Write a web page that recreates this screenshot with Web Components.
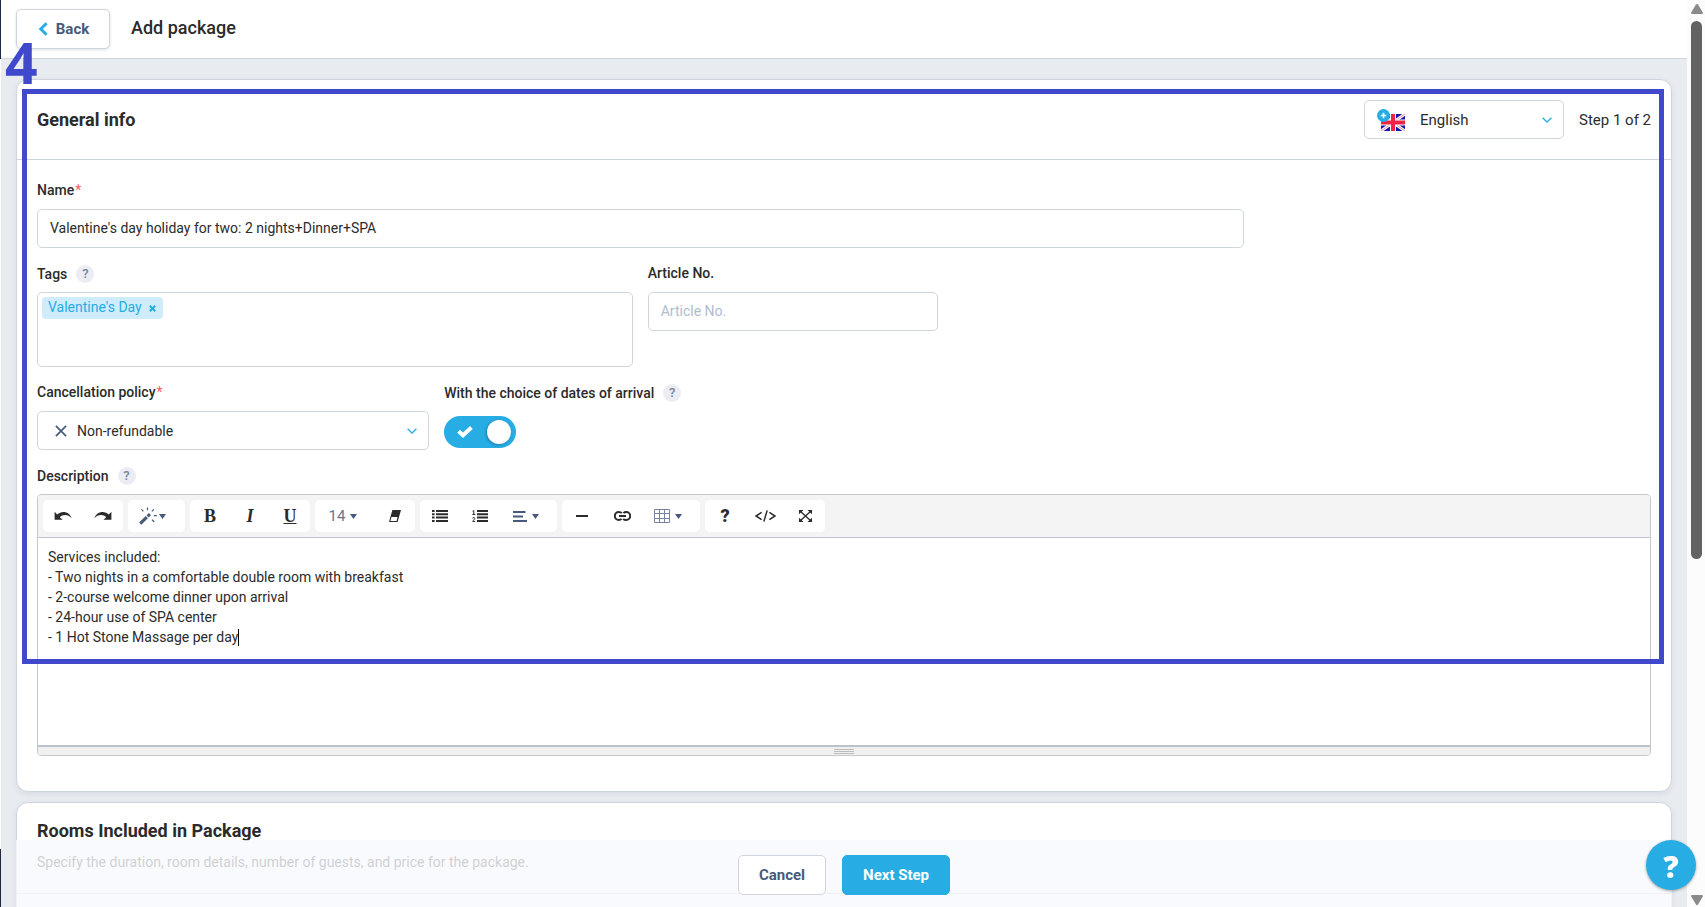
<!DOCTYPE html>
<html lang="en">
<head>
<meta charset="utf-8">
<title>Add package</title>
<style>
  :root {
    --accent: #27ade4;
    --line: #d0d5dd;
    --text: #2b2b2b;
    --slate: #475a7c;
    --mark: #4048cc;
  }

  * {
    box-sizing: border-box;
  }

  body {
    background-color: #e8ebf0;
    color: var(--text);
    font-family: Roboto, "Liberation Sans", sans-serif;
    font-size: 14px;
    height: 100vh;
    line-height: 18px;
    margin: 0;
    overflow: hidden;
  }

  package-page {
    height: 100%;
  }
</style>
</head>
<body>
<package-page>
  <page-header slot="header" heading="Add package"></page-header>

  <info-card heading="General info">
    <select-box slot="actions" name="Language" value="English" icon="flag" hide-label></select-box>
    <span slot="actions">Step 1 of 2</span>
    <form-grid>
      <text-field class="full" label="Name" required value="Valentine's day holiday for two: 2 nights+Dinner+SPA"></text-field>
      <tags-field class="half" label="Tags" tag="Valentine's Day"></tags-field>
      <text-field class="quarter" label="Article No." placeholder="Article No."></text-field>
      <select-box class="third" name="Cancellation policy" required value="Non-refundable" icon="cross"></select-box>
      <toggle-field class="rest" label="With the choice of dates of arrival"></toggle-field>
    </form-grid>
    <rich-editor label="Description"></rich-editor>
  </info-card>

  <info-card heading="Rooms Included in Package" subheading="Specify the duration, room details, number of guests, and price for the package."></info-card>

  <action-bar slot="footer"></action-bar>
  <help-bubble slot="footer"></help-bubble>
  <step-mark slot="footer" number="4"></step-mark>
  <scroll-rail slot="rail"></scroll-rail>
</package-page>

<script>
// shared rules for every labelled control
const fieldStyles = /*css*/`
  * {
    box-sizing: border-box;
  }

  :host {
    display: block;
    min-width: 0;
  }

  .label-row {
    align-items: center;
    display: flex;
    gap: 9px;
    height: 18px;
    margin-bottom: 10px;
  }

  .label-row.with-help {
    height: 20px;
    margin-bottom: 8px;
  }

  label {
    font-weight: 500;
  }

  .required {
    color: #ff5a5a;
    font-weight: 400;
    margin-left: 1px;
  }

  .help {
    align-items: center;
    background-color: #ebedf2;
    border: none;
    border-radius: 50%;
    color: #7485a3;
    display: flex;
    font: 500 13px/18px Roboto, sans-serif;
    height: 18px;
    justify-content: center;
    padding: 0;
    width: 18px;
  }

  .control {
    background-color: #fff;
    border: 1px solid var(--line);
    border-radius: 5px;
    color: var(--text);
    font: 14px/18px Roboto, "Liberation Sans", sans-serif;
    height: 39px;
    outline: none;
    padding: 0 12px;
    width: 100%;
  }

  input.control {
    padding-bottom: 2px;
  }

  .control::placeholder {
    color: #aebdd0;
    opacity: 1;
  }
`

const labelRow = (text, { required = false, help = false } = {}) => /*html*/`
  <div class="label-row ${help ? 'with-help' : ''}">
    <label for="control">${text}${required ? '<span class="required">*</span>' : ''}</label>
    ${help ? `<button type="button" class="help" aria-label="Help: ${text}">?</button>` : ''}
  </div>
`

class BaseElement extends HTMLElement {
  constructor () {
    super()
    this.shadow = this.attachShadow({ mode: 'open' })
  }

  connectedCallback () {
    this.render()
  }
}

class PackagePage extends BaseElement {
  render () {
    this.shadow.innerHTML =
    /*html*/`
    <style>
      :host {
        display: flex;
      }

      .edge {
        background: linear-gradient(#1f2943 59px, #fff 59px, #fff calc(100% - 58px), #1f2943 calc(100% - 58px));
        flex: none;
        width: 1px;
      }

      .page {
        display: flex;
        flex: 1;
        flex-direction: column;
        min-width: 0;
      }

      main {
        display: flex;
        flex: 1;
        flex-direction: column;
        gap: 10px;
        min-height: 0;
        overflow: hidden;
        padding: 20px 15px 0;
      }
    </style>

    <div class="edge"></div>
    <div class="page">
      <slot name="header"></slot>
      <main><slot></slot></main>
      <slot name="footer"></slot>
    </div>
    <slot name="rail"></slot>
    `
  }
}
customElements.define('package-page', PackagePage)

class PageHeader extends BaseElement {
  render () {
    this.shadow.innerHTML =
    /*html*/`
    <style>
      :host {
        align-items: center;
        background-color: #fff;
        border-bottom: 1px solid var(--line);
        display: flex;
        flex: none;
        gap: 21px;
        height: 59px;
        padding: 0 15px;
      }

      button {
        align-items: center;
        background-color: #fff;
        border: 1px solid var(--line);
        border-radius: 5px;
        box-shadow: 0 1px 3px rgba(30, 50, 90, 0.15);
        color: var(--slate);
        display: flex;
        font: 700 15px/18px Roboto, sans-serif;
        gap: 8px;
        height: 40px;
        justify-content: center;
        padding: 0 0 0 1px;
        width: 94px;
      }

      h1 {
        font-size: 18px;
        font-weight: 500;
        line-height: 24px;
        margin: 0;
        padding-bottom: 2px;
      }
    </style>

    <button type="button">
      <svg width="10" height="14" viewBox="0 0 10 14" fill="none" stroke="#27ade4" stroke-width="3"><path d="M8.6 1.2 2.8 7l5.8 5.8"/></svg>
      Back
    </button>
    <h1>${this.getAttribute('heading')}</h1>
    `
  }
}
customElements.define('page-header', PageHeader)

class InfoCard extends BaseElement {
  render () {
    const subheading = this.getAttribute('subheading')

    this.shadow.innerHTML =
    /*html*/`
    <style>
      :host {
        background-color: #fff;
        border: 1px solid var(--line);
        border-radius: 12px;
        box-shadow: 0 2px 6px rgba(30, 50, 90, 0.08);
        display: block;
        flex: none;
      }

      header {
        align-items: center;
        border-bottom: 1px solid var(--line);
        display: flex;
        gap: 15px;
        justify-content: space-between;
        min-height: 79px;
        padding: 0 20px;
      }

      header.stacked {
        align-items: flex-start;
        min-height: 74px;
        padding-top: 16px;
      }

      h2 {
        font-size: 18px;
        font-weight: 700;
        line-height: 24px;
        margin: 0;
      }

      p {
        color: var(--text);
        line-height: 20px;
        margin: 9px 0 0;
      }

      .actions {
        align-items: center;
        display: flex;
        font-size: 15px;
        gap: 15px;
      }

      .body {
        padding: 21px 20px 35px;
      }
    </style>

    <header class="${subheading ? 'stacked' : ''}">
      <div>
        <h2>${this.getAttribute('heading')}</h2>
        ${subheading ? `<p>${subheading}</p>` : ''}
      </div>
      <div class="actions"><slot name="actions"></slot></div>
    </header>
    <div class="body"><slot></slot></div>
    `
  }
}
customElements.define('info-card', InfoCard)

class FormGrid extends BaseElement {
  render () {
    this.shadow.innerHTML =
    /*html*/`
    <style>
      :host {
        display: block;
        padding-bottom: 16px;
      }

      /* three quarters of the card, one gutter less */
      .grid {
        column-gap: 15px;
        display: grid;
        grid-template-columns: repeat(12, minmax(0, 1fr));
        row-gap: 16px;
        width: calc(75% - 4px);
      }

      ::slotted(.full) { grid-column: span 12; }
      ::slotted(.half) { grid-column: span 6; }
      ::slotted(.quarter) { grid-column: span 3; }
      ::slotted(.third) { grid-column: 1 / span 4; }
      ::slotted(.rest) { grid-column: span 8; }
    </style>

    <div class="grid"><slot></slot></div>
    `
  }
}
customElements.define('form-grid', FormGrid)

class TextField extends BaseElement {
  render () {
    this.shadow.innerHTML =
    /*html*/`
    <style>${fieldStyles}</style>

    ${labelRow(this.getAttribute('label'), { required: this.hasAttribute('required') })}
    <input id="control" class="control" type="text"
      value="${this.getAttribute('value') || ''}"
      placeholder="${this.getAttribute('placeholder') || ''}">
    `
  }
}
customElements.define('text-field', TextField)

class TagsField extends BaseElement {
  render () {
    this.shadow.innerHTML =
    /*html*/`
    <style>
      ${fieldStyles}

      .box {
        align-items: flex-start;
        border: 1px solid var(--line);
        border-radius: 5px;
        display: flex;
        gap: 4px;
        height: 75px;
        padding: 4px;
      }

      .tag {
        align-items: center;
        background-color: #ceecfa;
        border-radius: 4px;
        color: var(--accent);
        display: flex;
        gap: 7px;
        height: 22px;
        padding: 0 7px 2px 6px;
      }

      .tag button {
        background: none;
        border: none;
        display: flex;
        padding: 2px 0 0;
      }

      input {
        background: none;
        border: none;
        flex: 1;
        font: inherit;
        height: 22px;
        min-width: 0;
        outline: none;
      }
    </style>

    ${labelRow(this.getAttribute('label'), { help: true })}
    <div class="box">
      <span class="tag">${this.getAttribute('tag')}
        <button type="button" aria-label="Remove tag">
          <svg width="7" height="7" viewBox="0 0 7 7" stroke="#27ade4" stroke-width="2"><path d="M.8.8l5.4 5.4M6.2.8.8 6.2"/></svg>
        </button>
      </span>
      <input id="control" type="text">
    </div>
    `
  }
}
customElements.define('tags-field', TagsField)

const selectIcons = {
  flag: /*html*/`
    <svg width="28" height="22" viewBox="0 0 28 22">
      <g transform="translate(4 5)">
        <path fill="#1416a4" d="M0 0h24v17H0z"/>
        <path stroke="#fff" stroke-width="3" d="M0 0l24 17M24 0 0 17"/>
        <path stroke="#f0718a" stroke-width="0.8" d="M0 0l24 17M24 0 0 17"/>
        <path stroke="#fff" stroke-width="6" d="M12 0v17M0 8.5h24"/>
        <path stroke="#ee2346" stroke-width="4" d="M12 0v17M0 8.5h24"/>
      </g>
      <circle cx="6.5" cy="6.5" r="6.5" fill="#27ade4"/>
      <path stroke="#fff" stroke-width="1.6" d="M6.5 3.8v5.4M3.8 6.5h5.4"/>
    </svg>`,
  cross: /*html*/`
    <svg width="12" height="12" viewBox="0 0 12 12" stroke="#475a7c" stroke-width="1.7"><path d="M.9.9l10.2 10.2M11.1.9.9 11.1"/></svg>`
}

class SelectBox extends BaseElement {
  render () {
    const name = this.getAttribute('name')
    const icon = this.getAttribute('icon')
    const hideLabel = this.hasAttribute('hide-label')

    this.shadow.innerHTML =
    /*html*/`
    <style>
      ${fieldStyles}

      :host([hide-label]) {
        width: 200px;
      }

      .wrap {
        display: grid;
      }

      .wrap > * {
        grid-area: 1 / 1;
      }

      select.control {
        appearance: none;
        padding: 0 32px 0 39px;
      }

      .flag select.control {
        font-size: 15px;
        padding-left: 55px;
      }

      .mark,
      .chevron {
        align-self: center;
        display: flex;
        pointer-events: none;
        z-index: 1;
      }

      .mark {
        padding-left: 18px;
      }

      .flag .mark {
        padding-left: 13px;
      }

      .chevron {
        justify-self: end;
        padding-right: 12px;
        padding-top: 1px;
      }
    </style>

    ${hideLabel ? '' : labelRow(name, { required: this.hasAttribute('required') })}
    <div class="wrap ${icon}">
      <select id="control" class="control" ${hideLabel ? `aria-label="${name}"` : ''}>
        <option>${this.getAttribute('value')}</option>
      </select>
      <span class="mark">${selectIcons[icon]}</span>
      <span class="chevron">
        <svg width="10" height="6" viewBox="0 0 10 6" fill="none" stroke="#27ade4" stroke-width="1.3"><path d="M.6.7 5 5 9.4.7"/></svg>
      </span>
    </div>
    `
  }
}
customElements.define('select-box', SelectBox)

class ToggleField extends BaseElement {
  render () {
    this.shadow.innerHTML =
    /*html*/`
    <style>
      ${fieldStyles}

      .switch {
        display: grid;
        padding-top: 5px;
        width: 72px;
      }

      .switch > * {
        grid-area: 1 / 1;
      }

      input {
        appearance: none;
        background-color: #c3cbd6;
        border-radius: 16px;
        height: 32px;
        margin: 0;
        width: 72px;
      }

      input:checked {
        background-color: var(--accent);
      }

      svg {
        align-self: center;
        margin-left: 13px;
        pointer-events: none;
      }

      .knob {
        align-self: center;
        background-color: #fff;
        border-radius: 50%;
        box-shadow: -1px 1px 3px rgba(0, 40, 80, 0.35);
        height: 24px;
        justify-self: end;
        margin-right: 5px;
        pointer-events: none;
        width: 24px;
      }
    </style>

    ${labelRow(this.getAttribute('label'), { help: true })}
    <div class="switch">
      <input id="control" type="checkbox" role="switch" checked>
      <svg width="16" height="12" viewBox="0 0 16 12" fill="none" stroke="#fff" stroke-width="4"><path d="M1.6 5.2 6 9.2l8.4-7.6"/></svg>
      <span class="knob"></span>
    </div>
    `
  }
}
customElements.define('toggle-field', ToggleField)

const icons = {
  undo: '<svg width="18" height="10" viewBox="0 0 18 10"><path d="M.6.8v8h8L5.8 6.200C8.400 3.500 13.800 2.600 17.600 7.200 15.600.6 7.600-.8 3.200 3.600z"/></svg>',
  redo: '<svg width="18" height="10" viewBox="0 0 18 10"><path d="M17.400.8v8h-8l2.800-2.600C9.600 3.500 4.200 2.600.4 7.200 2.400.6 10.400-.8 14.800 3.600z"/></svg>',
  magic: '<svg width="18" height="18" viewBox="0 0 18 18" stroke="#475a7c" fill="none"><path stroke-width="3.200" d="M1.200 16.600 7.800 10.200"/><path stroke-width="3" d="M8.600 9.400l2.400-2.200"/><path stroke-width="1.200" d="M8.500.4v2.800M2.400 2.400l2 2M14.800 2.400l-2 2M14.800 8.700h3M13 12.600l2.200 2.400M1.600 8.700"/></svg>',
  eraser: '<svg width="12" height="12" viewBox="0 0 12 12"><path fill-rule="evenodd" d="M3.400 0H12L8.600 12H0zM2.500 7.100 1.400 10.900h6.200l1-3.800z"/></svg>',
  ul: '<svg width="16" height="12" viewBox="0 0 16 12"><path d="M0 0h2.600v2H0zM4 0h12v2H4zM0 3.300h2.600v2H0zM4 3.300h12v2H4zM0 6.600h2.600v2H0zM4 6.600h12v2H4zM0 10h2.600v2H0zM4 10h12v2H4z"/></svg>',
  ol: '<svg width="16" height="12" viewBox="0 0 16 12"><path d="M5 0h11v2H5zM5 3.300h11v2H5zM5 6.600h11v2H5zM5 10h11v2H5z"/><path fill="none" stroke="#2b2b2b" d="M.6 1.200 1.800.5V4.500M.3 4.400h3M.4 8.200c.5-1 2.500-.9 2.400.3C2.700 9.500 1 10.300.6 11.400H3.300"/></svg>',
  align: '<svg width="14" height="11" viewBox="0 0 14 11" fill="#475a7c"><path d="M0 0h12.500v2H0zM0 4.500h10v2H0zM0 9h14v2H0z"/></svg>',
  minus: '<svg width="12" height="2" viewBox="0 0 12 2"><path d="M0 0h12v2H0z"/></svg>',
  link: '<svg width="17" height="10" viewBox="0 0 17 10" fill="none" stroke="#2b2b2b" stroke-width="2"><path d="M7.600 7.900C6.800 8.700 6 9 4.800 9a3.900 3.900 0 0 1 0-8C6 1 7 1.300 7.800 2.200M9.400 2.100C10.200 1.300 11 1 12.200 1a3.900 3.900 0 0 1 0 8C11 9 10 8.700 9.200 7.800M5 5h7"/></svg>',
  table: '<svg width="16" height="14" viewBox="0 0 16 14" fill="none" stroke="#75839c"><path d="M.5.5h15v13H.5zM.5 4.500h15M.5 9.500h15M5.500.5v13M10.500.5v13"/></svg>',
  code: '<svg width="21" height="12" viewBox="0 0 21 12" fill="none" stroke="#2b2b2b" stroke-width="1.500"><path d="M6.600 2.400 1 6l5.600 3.600M14.400 2.400 20 6l-5.600 3.600M12.200.4 8.800 11.600"/></svg>',
  expand: '<svg width="13" height="12" viewBox="0 0 13 12"><path d="M0 0h4.500L0 4.200zM13 0v4.200L8.500 0zM0 12V7.800L4.500 12zM13 12H8.500L13 7.800z"/><path stroke="#2b2b2b" stroke-width="1.300" d="M1 1l11 10M12 1 1 11"/></svg>',
  caret: '<svg width="7" height="5" viewBox="0 0 7 5" fill="#475a7c"><path d="M0 0h7L3.500 5z"/></svg>'
}

const toolbar = [
  [['Undo', icons.undo], ['Redo', icons.redo]],
  [['Style', icons.magic, 'menu tight']],
  [['Bold', '<b>B</b>'], ['Italic', '<b><i>I</i></b>'], ['Underline', '<b><u>U</u></b>']],
  [['Font size', '14', 'menu size'], ['Remove font style', icons.eraser]],
  [['Unordered list', icons.ul], ['Ordered list', icons.ol], ['Paragraph', icons.align, 'menu']],
  [['Horizontal rule', icons.minus], ['Link', icons.link], ['Table', icons.table, 'menu wide']],
  [['Help', '<strong>?</strong>'], ['Code view', icons.code], ['Full screen', icons.expand]]
]

const toolButton = ([title, content, kind = '']) => /*html*/`
  <button type="button" class="${kind}" aria-label="${title}">${content}${kind ? icons.caret : ''}</button>
`

class RichEditor extends BaseElement {
  render () {
    this.shadow.innerHTML =
    /*html*/`
    <style>
      ${fieldStyles}

      .editor {
        border: 1px solid #c8c8cb;
        border-radius: 4px;
        overflow: hidden;
      }

      .toolbar {
        background-color: #f4f4f4;
        border-bottom: 1px solid #bcc5cf;
        display: flex;
        flex-wrap: wrap;
        gap: 5px;
        padding: 5px;
      }

      .group {
        background-color: #fff;
        border-radius: 5px;
        display: flex;
        height: 32px;
      }

      .toolbar button {
        align-items: center;
        background: none;
        border: none;
        color: #2b2b2b;
        display: flex;
        font: 14px/18px Roboto, sans-serif;
        justify-content: center;
        padding: 0;
        width: 40px;
      }

      .toolbar button svg {
        fill: #2b2b2b;
      }

      .toolbar button svg[fill="none"] {
        fill: none;
      }

      .toolbar button.menu svg[fill^="#"] {
        fill: var(--slate);
      }

      .toolbar button.menu {
        color: #66768f;
        font-size: 15px;
        gap: 5px;
        padding-right: 6px;
        width: 57px;
      }

      .toolbar button.tight {
        gap: 2px;
        padding-right: 8px;
      }

      .toolbar button.size {
        padding-right: 4px;
        width: 60px;
      }

      .toolbar button.wide {
        width: 58px;
      }

      b {
        font: 700 18px/18px "Liberation Serif", serif;
      }

      strong {
        font: 900 18px/18px Roboto, sans-serif;
      }

      .area {
        position: relative;
      }

      textarea {
        border: none;
        color: var(--text);
        display: block;
        font: 14px/20px Roboto, "Liberation Sans", sans-serif;
        height: 207px;
        outline: none;
        padding: 9px 10px;
        resize: none;
        width: 100%;
      }

      /* text cursor at the end of the fifth line */
      .cursor {
        background-color: #000;
        height: 17px;
        left: 200px;
        position: absolute;
        top: 91px;
        width: 1px;
      }

      .grip {
        align-items: center;
        background-color: #f0f0f0;
        border-top: 2px solid #b9c3cd;
        display: flex;
        flex-direction: column;
        gap: 1px;
        height: 10px;
        padding-top: 2px;
      }

      .grip i {
        background-color: #bdbdbd;
        height: 1px;
        width: 20px;
      }
    </style>

    ${labelRow(this.getAttribute('label'), { help: true })}
    <div class="editor">
      <div class="toolbar">
        ${toolbar.map(group => `<div class="group">${group.map(toolButton).join('')}</div>`).join('')}
      </div>
      <div class="area">
        <textarea id="control" spellcheck="false">Services included:
- Two nights in a comfortable double room with breakfast
- 2-course welcome dinner upon arrival
- 24-hour use of SPA center
- 1 Hot Stone Massage per day</textarea>
        <span class="cursor"></span>
      </div>
      <div class="grip"><i></i><i></i><i></i></div>
    </div>
    `
  }
}
customElements.define('rich-editor', RichEditor)

class ActionBar extends BaseElement {
  render () {
    this.shadow.innerHTML =
    /*html*/`
    <style>
      :host {
        background-color: rgba(247, 249, 253, 0.8);
        bottom: 0;
        box-sizing: border-box;
        display: flex;
        gap: 16px;
        justify-content: center;
        left: 16px;
        padding: 15px 0 12px;
        position: fixed;
        right: 33px;
      }

      button {
        background-color: #fff;
        border: 1px solid var(--line);
        border-radius: 5px;
        color: var(--slate);
        font: 700 15px/18px Roboto, sans-serif;
        height: 40px;
        padding: 0 20px;
      }

      .primary {
        background-color: var(--accent);
        border-color: var(--accent);
        color: #fff;
      }
    </style>

    <button type="button">Cancel</button>
    <button type="submit" class="primary">Next Step</button>
    `
  }
}
customElements.define('action-bar', ActionBar)

class HelpBubble extends BaseElement {
  render () {
    this.shadow.innerHTML =
    /*html*/`
    <style>
      :host {
        bottom: 17px;
        display: block;
        position: fixed;
        right: 9px;
        z-index: 2;
      }

      button {
        background-color: var(--accent);
        border: none;
        border-radius: 50%;
        box-shadow: 0 1px 3px rgba(0, 0, 0, 0.35);
        color: #fff;
        font: 900 30px/50px "Noto Sans", sans-serif;
        height: 50px;
        padding: 2px 0 0;
        width: 50px;
      }
    </style>

    <button type="button" aria-label="Help">?</button>
    `
  }
}
customElements.define('help-bubble', HelpBubble)

// numbered frame drawn over the first card
class StepMark extends BaseElement {
  render () {
    this.shadow.innerHTML =
    /*html*/`
    <style>
      :host {
        border: 5px solid var(--mark);
        box-sizing: border-box;
        display: block;
        height: 575px;
        left: 22px;
        pointer-events: none;
        position: absolute;
        right: 41px;
        top: 89px;
      }

      span {
        color: var(--mark);
        font: 700 57px/60px "Open Sans", sans-serif;
        left: -22px;
        position: absolute;
        top: -62px;
      }
    </style>

    <span>${this.getAttribute('number')}</span>
    `
  }
}
customElements.define('step-mark', StepMark)

class ScrollRail extends BaseElement {
  render () {
    this.shadow.innerHTML =
    /*html*/`
    <style>
      :host {
        align-items: center;
        background-color: #fcfcfc;
        box-sizing: border-box;
        display: flex;
        flex: none;
        flex-direction: column;
        padding: 4px 0 2px 1px;
        width: 18px;
      }

      .track {
        flex: 1;
        padding: 7px 0;
      }

      .thumb {
        background-color: #636363;
        border-radius: 6px;
        height: 62%;
        width: 11px;
      }
    </style>

    <svg width="12" height="10" viewBox="0 0 12 10" fill="#8a8a8a"><path d="M6 0c.5 0 .8.3 1 .6L11.800 8.500c.3.8 0 1.500-.8 1.500H1C.2 10-.1 9.300.2 8.500L5 .6C5.200.3 5.500 0 6 0z"/></svg>
    <div class="track"><div class="thumb"></div></div>
    <svg width="12" height="10" viewBox="0 0 12 10" fill="#8a8a8a"><path d="M6 10c.5 0 .8-.3 1-.6l4.800-7.900C12.100.7 11.800 0 11 0H1C.2 0-.1.700.2 1.500L5 9.400c.2.3.5.6 1 .6z"/></svg>
    `
  }
}
customElements.define('scroll-rail', ScrollRail)
</script>
</body>
</html>
